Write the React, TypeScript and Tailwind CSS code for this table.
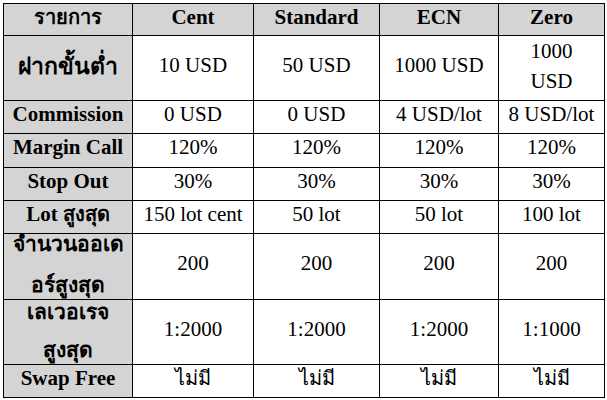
import React from 'react';

type Row = {
  label: React.ReactNode;
  labelClass?: string;
  multi?: boolean;
  cells: React.ReactNode[];
  h: string;
  thaiCells?: boolean;
};

const thaiFont = "font-[family-name:'Noto_Sans','DejaVu_Sans',sans-serif]";

const rows: Row[] = [
  {
    label: 'ฝากขั้นต่ำ',
    labelClass: `${thaiFont} text-[23px]`,
    cells: ['10 USD', '50 USD', '1000 USD', <div className="-mt-[3px] -mb-[5px] leading-[30px]">1000<br />USD</div>],
    h: 'h-[65px]',
  },
  { label: 'Commission', cells: ['0 USD', '0 USD', '4 USD/lot', '8 USD/lot'], h: 'h-[33px]' },
  { label: 'Margin Call', cells: ['120%', '120%', '120%', '120%'], h: 'h-[34px]' },
  { label: 'Stop Out', cells: ['30%', '30%', '30%', '30%'], h: 'h-[33px]' },
  {
    label: <>Lot <span className={`${thaiFont} text-[20px]`}>สูงสุด</span></>,
    cells: ['150 lot cent', '50 lot', '50 lot', '100 lot'],
    h: 'h-[33px]',
  },
  {
    label: <div className="-mt-[11px] -mb-[6px] leading-[41px]">จำนวนออเด<br />อร์สูงสุด</div>,
    labelClass: `${thaiFont} text-[21px]`,
    multi: true,
    cells: ['200', '200', '200', '200'],
    h: 'h-[66px]',
  },
  {
    label: <div className="-mt-[9px] -mb-[4px] leading-[38px]">เลเวอเรจ<br />สูงสุด</div>,
    labelClass: `${thaiFont} text-[21px]`,
    multi: true,
    cells: ['1:2000', '1:2000', '1:2000', '1:1000'],
    h: 'h-[65px]',
  },
  { label: 'Swap Free', cells: ['ไม่มี', 'ไม่มี', 'ไม่มี', 'ไม่มี'], h: 'h-[33px]', thaiCells: true },
];

const headers = ['Cent', 'Standard', 'ECN', 'Zero'];

export default function App() {
  return (
    <div className="w-[607px] h-[400px] bg-white pt-[3px] pl-[3px] overflow-hidden">
      <table className="table-fixed border-collapse text-black text-[21px] leading-[24px] font-[family-name:'Liberation_Serif','Times_New_Roman',serif]">
        <colgroup>
          <col className="w-[129px]" />
          <col className="w-[121px]" />
          <col className="w-[126px]" />
          <col className="w-[119px]" />
          <col className="w-[106px]" />
        </colgroup>
        <thead>
          <tr className="h-[32px] bg-[#d4d4d4]">
            <th className={`border border-black px-0 pt-0 pb-[6px] text-center font-bold text-[20px] ${thaiFont}`}>
              รายการ
            </th>
            {headers.map((h) => (
              <th key={h} className="border border-black px-0 pt-0 pb-[6px] text-center font-bold">
                {h}
              </th>
            ))}
          </tr>
        </thead>
        <tbody>
          {rows.map((r, i) => (
            <tr key={i} className={r.h}>
              <td
                className={`border border-black bg-[#d4d4d4] px-0 pt-0 text-center font-bold ${
                  r.multi ? 'pb-0' : 'pb-[7px]'
                } ${r.labelClass ?? ''}`}
              >
                {r.label}
              </td>
              {r.cells.map((c, j) => (
                <td
                  key={j}
                  className={`border border-black px-0 pt-0 pb-[7px] text-center align-middle ${
                    r.thaiCells ? `${thaiFont} text-[20px]` : ''
                  }`}
                >
                  {c}
                </td>
              ))}
            </tr>
          ))}
        </tbody>
      </table>
    </div>
  );
}
